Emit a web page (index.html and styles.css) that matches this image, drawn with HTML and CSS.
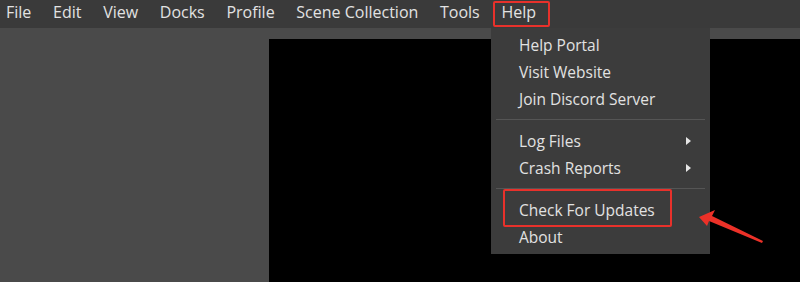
FILE: index.html
```html
<!DOCTYPE html>
<html lang="en">
<head>
    <meta charset="UTF-8">
    <title>OBS Help menu</title>
    <link rel="stylesheet" href="styles.css">
</head>
<body>
    <div class="menubar">
        <span class="menu-item">File</span>
        <span class="menu-item">Edit</span>
        <span class="menu-item">View</span>
        <span class="menu-item">Docks</span>
        <span class="menu-item">Profile</span>
        <span class="menu-item">Scene Collection</span>
        <span class="menu-item">Tools</span>
        <span class="menu-item">Help</span>
    </div>

    <div class="workspace">
        <div class="side-panel"></div>
        <div class="preview"></div>
    </div>

    <!-- Help dropdown -->
    <ul class="dropdown">
        <li class="drop-item">Help Portal</li>
        <li class="drop-item">Visit Website</li>
        <li class="drop-item">Join Discord Server</li>
        <li class="drop-sep"></li>
        <li class="drop-item sub">Log Files</li>
        <li class="drop-item sub">Crash Reports</li>
        <li class="drop-sep"></li>
        <li class="drop-item">Check For Updates</li>
        <li class="drop-item">About</li>
    </ul>

    <!-- annotations -->
    <div class="mark mark-help"></div>
    <div class="mark mark-update"></div>
    <svg class="pointer" width="80" height="40" viewBox="0 0 80 40">
        <polygon points="0,7 16,0 13,6 64,31 63,33 10,11 8,16" fill="#ec3128"/>
    </svg>
</body>
</html>
```

FILE: styles.css
```css
body {
    margin: 0;
    background: #4a4a4a;
    font-family: 'Open Sans', 'Noto Sans', sans-serif;
    font-size: 15.5px;
    color: #e2e2e2;
    height: 282px;
    overflow: hidden;
}

.menubar {
    height: 28px;
    box-sizing: border-box;
    padding: 0 0 3px 6px;
    background: #3a3a3a;
    display: flex;
    align-items: center;
    gap: 21.7px;
    font-size: 16px;
}

.menu-item {
    line-height: 25px;
}

.workspace {
    display: flex;
    height: 254px;
}

.side-panel {
    width: 269px;
    background: #4a4a4a;
}

.preview {
    flex: 1;
    margin-top: 11px;
    background: #000;
}

.dropdown {
    position: absolute;
    left: 491px;
    top: 28px;
    width: 219px;
    margin: 0;
    padding: 4px 0;
    list-style: none;
    background: #3c3c3c;
    box-sizing: border-box;
    height: 226px;
}

.drop-item {
    height: 27px;
    line-height: 27px;
    padding-left: 28px;
    position: relative;
}

.drop-item.sub::after {
    content: "";
    position: absolute;
    right: 19px;
    top: 9px;
    border-left: 5px solid #e6e6e6;
    border-top: 4px solid transparent;
    border-bottom: 4px solid transparent;
}

.drop-sep {
    height: 1px;
    margin: 6px 5px 8px;
    background: #555;
}

.mark {
    position: absolute;
    border: 2px solid #e8312b;
    border-radius: 2px;
    box-sizing: border-box;
}

.mark-help {
    left: 493px;
    top: 1px;
    width: 57px;
    height: 26px;
}

.mark-update {
    left: 503px;
    top: 189px;
    width: 169px;
    height: 38px;
}

.pointer {
    position: absolute;
    left: 699px;
    top: 210px;
}
```
